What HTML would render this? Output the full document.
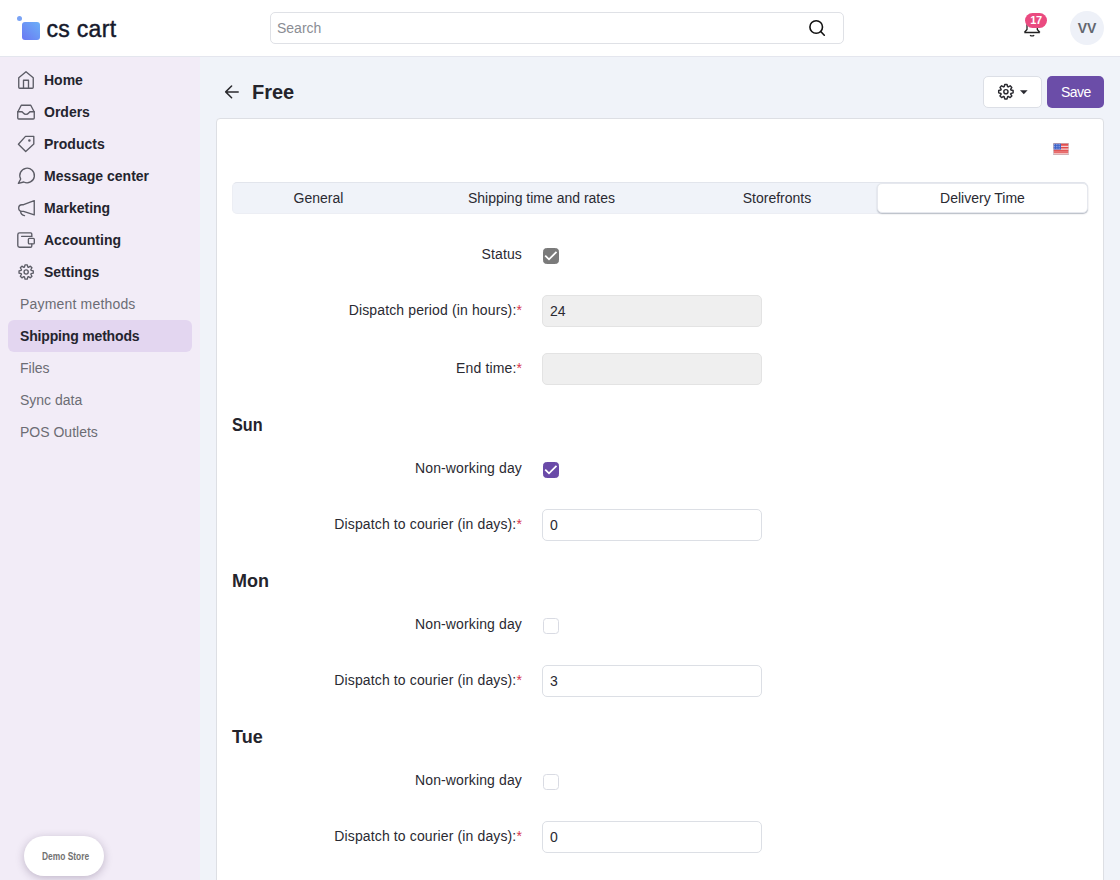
<!DOCTYPE html>
<html><head><meta charset="utf-8">
<style>
*{box-sizing:border-box;margin:0;padding:0}
html,body{width:1120px;height:880px;overflow:hidden;font-family:"Liberation Sans",sans-serif;color:#24242c;background:#f0f3f9}
.abs{position:absolute}
#hdr{position:absolute;left:0;top:0;width:1120px;height:57px;background:#fff;border-bottom:1px solid #e4e6ee}
#logo-dot{left:17px;top:16px;width:5px;height:5px;border-radius:50%;background:#7aa3f5}
#logo-sq{left:22px;top:22px;width:18px;height:18px;border-radius:3px;background:linear-gradient(45deg,#6a78f2,#6cb0f8)}
#logo-txt{left:46.5px;top:13.6px;font-size:23px;letter-spacing:0.3px;color:#161a2c;line-height:30px;-webkit-text-stroke:0.45px #161a2c}
#search{left:270px;top:12px;width:574px;height:32px;border:1px solid #dfe1e6;border-radius:5px;background:#fff}
#search span{position:absolute;left:6px;top:7px;font-size:14px;color:#8a8d94}
#side{position:absolute;left:0;top:57px;width:200px;height:823px;background:#f2ecf7}
.ni{position:absolute;left:44px;font-size:14px;font-weight:bold;color:#24242e;line-height:16px}
.si{position:absolute;left:20px;font-size:14px;color:#6c6c74;line-height:16px}
.ico{position:absolute;left:16px;width:20px;height:20px}
#act{left:8px;top:320px;width:184px;height:32px;border-radius:6px;background:#e3d6f0}
#demo{left:24px;top:836px;width:80px;height:40px;border-radius:20px;background:#fff;box-shadow:0 2px 8px rgba(60,40,80,.28)}
#demo span{position:absolute;left:18px;top:14.5px;font-size:10px;line-height:12px;font-weight:bold;color:#727272;transform:scaleX(0.84);transform-origin:0 0;white-space:nowrap}
#card{left:216px;top:118px;width:888px;height:800px;background:#fff;border:1px solid #dddfe4;border-radius:4px}
#tabs{left:232px;top:182px;width:856px;height:32px;background:#f0f3f9;border-radius:5px;border:1px solid #eceef4;border-top-color:#e2e5ec}
.tab{position:absolute;top:190px;font-size:14px;color:#2a2a32;line-height:16px;text-align:center}
#tabact{left:877px;top:183px;width:211px;height:30px;background:#fff;border:1px solid #e6e8ee;border-radius:5px;box-shadow:0 1px 1.5px rgba(40,50,70,.28)}
.lbl{position:absolute;right:598px;font-size:14px;color:#2a2a32;line-height:16px;text-align:right;white-space:nowrap;letter-spacing:0.13px}
.lbl i{font-style:normal;color:#d6334e}
.inp{position:absolute;left:542px;width:220px;height:32px;border:1px solid #dcdfe5;border-radius:5px;background:#fff}
.inp.dis{background:#efefef;border-color:#e3e3e3}
.inp span{position:absolute;left:7px;top:7px;font-size:14px;line-height:16px;color:#2a2a32}
.cb{position:absolute;left:543px;width:16px;height:16px;border-radius:3.5px;border:1.5px solid #d9dbe3;background:#fff}
.cb.on{background:#6a4aa8;border-color:#6a4aa8}
.cb.gr{background:#7a7a7a;border-color:#7a7a7a}
.day{position:absolute;left:232px;font-size:18px;font-weight:bold;color:#24242c;line-height:20px}
#save{left:1047px;top:76px;width:57px;height:32px;background:#6b4da8;border-radius:5px;color:#fff;font-size:14px}
#save span{position:absolute;left:14px;top:8px;line-height:16px;letter-spacing:-0.5px}
#gear{left:983px;top:76px;width:59px;height:32px;background:#fff;border:1px solid #dcdfe6;border-radius:5px}
</style></head><body>
<div id="hdr"></div>
<div class="abs" id="logo-dot"></div>
<div class="abs" id="logo-sq"></div>
<div class="abs" id="logo-txt">cs cart</div>
<div class="abs" id="search"><span>Search</span>
<svg class="abs" style="left:536px;top:6px" width="20" height="20" viewBox="0 0 20 20"><circle cx="9.2" cy="8" r="6.3" fill="none" stroke="#111" stroke-width="1.6"/><line x1="13.7" y1="12.5" x2="17.3" y2="16.2" stroke="#111" stroke-width="1.6" stroke-linecap="round"/></svg>
</div>
<svg class="abs" style="left:1022px;top:17px" width="22" height="22" viewBox="0 0 22 22"><path d="M2.3 15.5h15.6M5 11v1.5l-2.7 3M15.3 11v1.5l2.6 3M5 12V8a5.2 5.2 0 0 1 10.3 0v4" fill="none" stroke="#222" stroke-width="1.3" stroke-linejoin="round"/><path d="M8 18.2q2.1 1.5 4.2 0" fill="none" stroke="#222" stroke-width="1.3"/></svg>
<div class="abs" style="left:1025px;top:13px;width:22px;height:15px;border-radius:8px;background:#ea4a80;color:#fff;font-size:11px;font-weight:bold;text-align:center;line-height:15px;letter-spacing:-0.3px">17</div>
<div class="abs" style="left:1070px;top:11px;width:34px;height:34px;border-radius:50%;background:#eef1f8;color:#63676f;font-size:14px;font-weight:bold;text-align:center;line-height:34px">VV</div>

<div id="side"></div>
<div class="abs" id="act"></div>
<div class="ni" style="top:72px">Home</div>
<div class="ni" style="top:104px">Orders</div>
<div class="ni" style="top:136px">Products</div>
<div class="ni" style="top:168px">Message center</div>
<div class="ni" style="top:200px">Marketing</div>
<div class="ni" style="top:232px">Accounting</div>
<div class="ni" style="top:264px">Settings</div>
<div class="si" style="top:296px;letter-spacing:0.18px">Payment methods</div>
<div class="si" style="top:328px;font-weight:bold;color:#24242e;letter-spacing:-0.17px">Shipping methods</div>
<div class="si" style="top:360px">Files</div>
<div class="si" style="top:392px">Sync data</div>
<div class="si" style="top:424px">POS Outlets</div>
<svg class="abs" style="left:0;top:0" width="200" height="300" viewBox="0 0 200 300" fill="none" stroke="#5c5c66" stroke-width="1.35" stroke-linejoin="round" stroke-linecap="round">
<path d="M18.75 77.75L26 71.75L33.25 77.75V87.25Q33.25 88.25 32.25 88.25H19.75Q18.75 88.25 18.75 87.25Z"/><path d="M23.5 88.25V80.25H28.5V88.25"/>
<path d="M17.75 112L21.25 105.25H30.75L34.25 112V118Q34.25 119 33.25 119H18.75Q17.75 119 17.75 118Z"/><path d="M17.75 111.75H21.5Q22.5 111.75 23 112.75Q26 116 29 112.75Q29.5 111.75 30.5 111.75H34.25"/>
<path d="M25.5 136.4H33.8V144L25.7 151.5L18.4 144.2Z"/><circle cx="29.4" cy="140.5" r="0.6" fill="#5c5c66"/>
<path d="M20.7 179A7.3 7.3 0 1 1 23.8 182L18.4 183.4Z"/>
<path d="M34.25 200.6V214.9L23.5 211.3H22A3.3 3.3 0 0 1 22 204.7H23.5Z"/><path d="M20.6 211.6Q21 215 24.5 215.6"/>
<path d="M31.8 236.3V234Q31.8 232.9 30.7 232.9H19.6Q17.8 232.9 17.8 234.7V245.4Q17.8 247.2 19.6 247.2H30.5Q31.8 247.2 31.8 245.9V244"/><path d="M21.6 236.3H31.8"/><rect x="28.4" y="238.3" width="5.9" height="5.6" rx="1"/>
<path d="M24.46 267.08 L25.02 264.89 L27.28 264.89 L27.84 267.08 L28.43 267.33 L30.38 266.18 L31.97 267.77 L30.82 269.72 L31.07 270.31 L33.26 270.87 L33.26 273.13 L31.07 273.69 L30.82 274.28 L31.97 276.23 L30.38 277.82 L28.43 276.67 L27.84 276.92 L27.28 279.11 L25.02 279.11 L24.46 276.92 L23.87 276.67 L21.92 277.82 L20.33 276.23 L21.48 274.28 L21.23 273.69 L19.04 273.13 L19.04 270.87 L21.23 270.31 L21.48 269.72 L20.33 267.77 L21.92 266.18 L23.87 267.33Z"/><circle cx="26.15" cy="272" r="2.1"/>
</svg>
<div class="abs" id="demo"><span>Demo Store</span></div>

<!-- main -->
<svg class="abs" style="left:223px;top:83px" width="18" height="18" viewBox="0 0 18 18"><path d="M15.2 8.9H2.8M8.6 3L2.7 8.9L8.6 14.8" fill="none" stroke="#2a2a2e" stroke-width="1.5" stroke-linecap="round" stroke-linejoin="round"/></svg>
<div class="abs" style="left:252px;top:81px;font-size:20px;font-weight:bold;line-height:22px;color:#24242c">Free</div>
<div class="abs" id="gear"></div>
<svg class="abs" style="left:983px;top:76px" width="59" height="32" viewBox="983 76 59 32" fill="none" stroke="#2a2a30" stroke-linejoin="round">
<path d="M1004.17 86.69 L1004.76 84.49 L1007.04 84.49 L1007.63 86.69 L1008.22 86.94 L1010.19 85.79 L1011.81 87.41 L1010.66 89.38 L1010.91 89.97 L1013.11 90.56 L1013.11 92.84 L1010.91 93.43 L1010.66 94.02 L1011.81 95.99 L1010.19 97.61 L1008.22 96.46 L1007.63 96.71 L1007.04 98.91 L1004.76 98.91 L1004.17 96.71 L1003.58 96.46 L1001.61 97.61 L999.99 95.99 L1001.14 94.02 L1000.89 93.43 L998.69 92.84 L998.69 90.56 L1000.89 89.97 L1001.14 89.38 L999.99 87.41 L1001.61 85.79 L1003.58 86.94Z" stroke-width="1.45"/><circle cx="1005.9" cy="91.7" r="2.1" stroke-width="1.45"/>
<path d="M1020 90.2H1027.6L1023.8 94.2Z" fill="#2a2a30" stroke="none"/>
</svg>
<div class="abs" id="save"><span>Save</span></div>

<div class="abs" id="card"></div>
<svg class="abs" style="left:1053px;top:143px" width="16" height="12" viewBox="0 0 16 12"><rect x="0" y="0" width="16" height="12" fill="#fff"/><rect x="0.5" y="0.50" width="15" height="1.44" fill="#e0474a"/><rect x="0.5" y="3.88" width="15" height="1.44" fill="#e0474a"/><rect x="0.5" y="7.27" width="15" height="1.44" fill="#e0474a"/><rect x="0.5" y="0.50" width="15" height="0.85" fill="#e24a4a"/><rect x="0.5" y="2.19" width="15" height="0.85" fill="#e24a4a"/><rect x="0.5" y="3.88" width="15" height="0.85" fill="#e24a4a"/><rect x="0.5" y="5.58" width="15" height="0.85" fill="#e24a4a"/><rect x="0.5" y="7.27" width="15" height="0.85" fill="#e24a4a"/><rect x="0.5" y="8.96" width="15" height="0.85" fill="#e24a4a"/><rect x="0.5" y="10.65" width="15" height="0.85" fill="#e24a4a"/><rect x="0.5" y="0.5" width="7.5" height="6" fill="#3d63c9"/><circle cx="1.6" cy="1.7" r="0.45" fill="#dfe6ff"/><circle cx="3.3" cy="1.7" r="0.45" fill="#dfe6ff"/><circle cx="5.0" cy="1.7" r="0.45" fill="#dfe6ff"/><circle cx="6.7" cy="1.7" r="0.45" fill="#dfe6ff"/><circle cx="1.6" cy="3.4" r="0.45" fill="#dfe6ff"/><circle cx="3.3" cy="3.4" r="0.45" fill="#dfe6ff"/><circle cx="5.0" cy="3.4" r="0.45" fill="#dfe6ff"/><circle cx="6.7" cy="3.4" r="0.45" fill="#dfe6ff"/><circle cx="1.6" cy="5.1" r="0.45" fill="#dfe6ff"/><circle cx="3.3" cy="5.1" r="0.45" fill="#dfe6ff"/><circle cx="5.0" cy="5.1" r="0.45" fill="#dfe6ff"/><circle cx="6.7" cy="5.1" r="0.45" fill="#dfe6ff"/><rect x="0.25" y="0.25" width="15.5" height="11.5" fill="none" stroke="#b8b8c0" stroke-width="0.5"/></svg>

<div class="abs" id="tabs"></div>
<div class="abs" id="tabact"></div>
<div class="tab" style="left:232px;width:173px">General</div>
<div class="tab" style="left:405px;width:273px">Shipping time and rates</div>
<div class="tab" style="left:678px;width:198px">Storefronts</div>
<div class="tab" style="left:877px;width:211px">Delivery Time</div>

<div class="lbl" style="top:246px">Status</div>
<div class="cb gr" style="top:248px"><svg width="16" height="16" viewBox="0 0 16 16" style="position:absolute;left:-1px;top:-1px"><path d="M2.2 7.6L6 11.3L13.5 3.9" fill="none" stroke="#fff" stroke-width="1.8"/></svg></div>
<div class="lbl" style="top:302px">Dispatch period (in hours):<i>*</i></div>
<div class="inp dis" style="top:295px"><span>24</span></div>
<div class="lbl" style="top:360px">End time:<i>*</i></div>
<div class="inp dis" style="top:353px"></div>

<div class="day" style="top:415px;transform:scaleX(0.9);transform-origin:0 0">Sun</div>
<div class="lbl" style="top:460px">Non-working day</div>
<div class="cb on" style="top:462px"><svg width="16" height="16" viewBox="0 0 16 16" style="position:absolute;left:-1px;top:-1px"><path d="M2.2 7.6L6 11.3L13.5 3.9" fill="none" stroke="#fff" stroke-width="1.8"/></svg></div>
<div class="lbl" style="top:516px">Dispatch to courier (in days):<i>*</i></div>
<div class="inp" style="top:509px"><span>0</span></div>

<div class="day" style="top:571px">Mon</div>
<div class="lbl" style="top:616px">Non-working day</div>
<div class="cb" style="top:618px"></div>
<div class="lbl" style="top:672px">Dispatch to courier (in days):<i>*</i></div>
<div class="inp" style="top:665px"><span>3</span></div>

<div class="day" style="top:727px">Tue</div>
<div class="lbl" style="top:772px">Non-working day</div>
<div class="cb" style="top:774px"></div>
<div class="lbl" style="top:828px">Dispatch to courier (in days):<i>*</i></div>
<div class="inp" style="top:821px"><span>0</span></div>
</body></html>
